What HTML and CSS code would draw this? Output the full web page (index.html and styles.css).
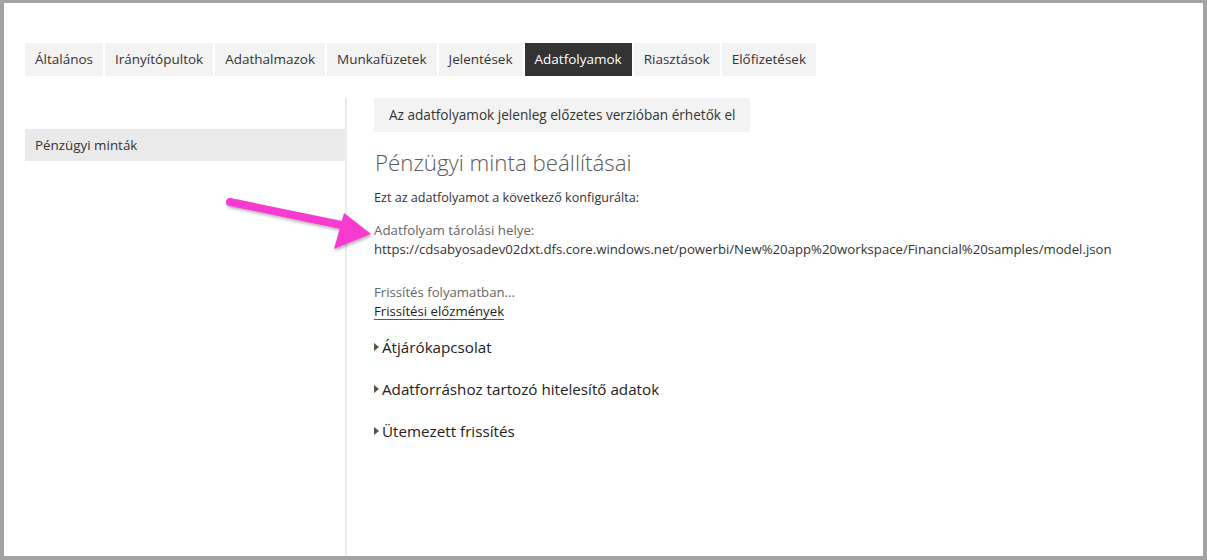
FILE: index.html
```html
<!DOCTYPE html>
<html lang="hu">
<head>
<meta charset="utf-8">
<title>Adatfolyamok</title>
<link rel="stylesheet" href="styles.css">
</head>
<body>
<div class="frame">
  <nav class="tabs">
    <div class="tab">Általános</div>
    <div class="tab">Irányítópultok</div>
    <div class="tab">Adathalmazok</div>
    <div class="tab">Munkafüzetek</div>
    <div class="tab">Jelentések</div>
    <div class="tab active">Adatfolyamok</div>
    <div class="tab">Riasztások</div>
    <div class="tab">Előfizetések</div>
  </nav>
  <div class="main">
    <aside class="side">
      <div class="side-item">Pénzügyi minták</div>
    </aside>
    <section class="content">
      <div class="notice">Az adatfolyamok jelenleg előzetes verzióban érhetők el</div>
      <h1 class="title">Pénzügyi minta beállításai</h1>
      <p class="conf">Ezt az adatfolyamot a következő konfigurálta:</p>
      <p class="label">Adatfolyam tárolási helye:</p>
      <p class="url">https://cdsabyosadev02dxt.dfs.core.windows.net/powerbi/New%20app%20workspace/Financial%20samples/model.json</p>
      <p class="status">Frissítés folyamatban...</p>
      <a class="history">Frissítési előzmények</a>
      <div class="exp"><span class="caret"></span>Átjárókapcsolat</div>
      <div class="exp"><span class="caret"></span>Adatforráshoz tartozó hitelesítő adatok</div>
      <div class="exp"><span class="caret"></span>Ütemezett frissítés</div>
    </section>
  </div>
  <svg class="arrow" width="160" height="70" viewBox="0 0 160 70">
    <defs>
      <filter id="sh" x="-20%" y="-20%" width="140%" height="160%">
        <feDropShadow dx="1" dy="2" stdDeviation="1.5" flood-color="#000" flood-opacity="0.3"/>
      </filter>
    </defs>
    <g filter="url(#sh)" fill="#f73bd0" stroke="none">
      <line x1="6" y1="16" x2="122" y2="40" stroke="#f73bd0" stroke-width="8" stroke-linecap="round"/>
      <polygon points="120,27 147,48 110,63"/>
    </g>
  </svg>
</div>
</body>
</html>
```
FILE: styles.css
```css
* { box-sizing: border-box; }
html, body { margin: 0; padding: 0; }
body {
  font-family: "Open Sans", "Noto Sans", sans-serif;
  color: #333;
  background: #fff;
}
.frame {
  position: relative;
  width: 1207px;
  height: 560px;
  border: 4px solid #a3a3a3;
  border-top-width: 3px;
  background: #fff;
  overflow: hidden;
}
.tabs {
  display: flex;
  gap: 2px;
  padding: 40px 0 0 21px;
}
.tab {
  height: 33px;
  line-height: 33px;
  padding: 0 10px;
  background: #f3f3f3;
  font-size: 13.5px;
  color: #333;
  white-space: nowrap;
}
.tab.active {
  background: #333;
  color: #fff;
}
.main {
  display: flex;
  margin-top: 22px;
  height: 458px;
}
.side {
  width: 343px;
  padding: 31px 0 0 21px;
  border-right: 2px solid #ececec;
}
.side-item {
  height: 32px;
  line-height: 32px;
  background: #eaeaea;
  padding-left: 10px;
  font-size: 13.4px;
  color: #333;
}
.content {
  padding-left: 27px;
  display: flex;
  flex-direction: column;
  align-items: flex-start;
}
.notice {
  height: 34px;
  line-height: 34px;
  padding: 0 14px 0 15px;
  background: #f3f3f3;
  font-size: 13.6px;
  color: #333;
}
.title {
  margin: 17px 0 0 1px;
  font-size: 22.3px;
  font-weight: 300;
  color: #5a5a5a;
  line-height: 28px;
}
p { margin: 0; }
.conf {
  margin-top: 12px;
  font-size: 12.6px;
  line-height: 18px;
  color: #333;
}
.label {
  margin-top: 14px;
  font-size: 13.3px;
  line-height: 19px;
  color: #666;
}
.url {
  font-size: 13.2px;
  line-height: 19px;
  color: #333;
}
.status {
  margin-top: 24px;
  font-size: 13.2px;
  line-height: 19px;
  color: #666;
}
.history {
  font-size: 13.2px;
  line-height: 19px;
  color: #222;
  text-decoration: underline;
  text-decoration-color: #555;
  text-underline-offset: 3px;
}
.exp {
  display: flex;
  align-items: center;
  margin-top: 13px;
  height: 25px;
  font-size: 15.2px;
  color: #222;
}
.exp + .exp { margin-top: 17px; }
.caret {
  width: 0;
  height: 0;
  border-top: 4px solid transparent;
  border-bottom: 4px solid transparent;
  border-left: 5px solid #5a4f4a;
  margin-right: 3px;
}
.arrow {
  position: absolute;
  left: 220px;
  top: 183px;
}
```
